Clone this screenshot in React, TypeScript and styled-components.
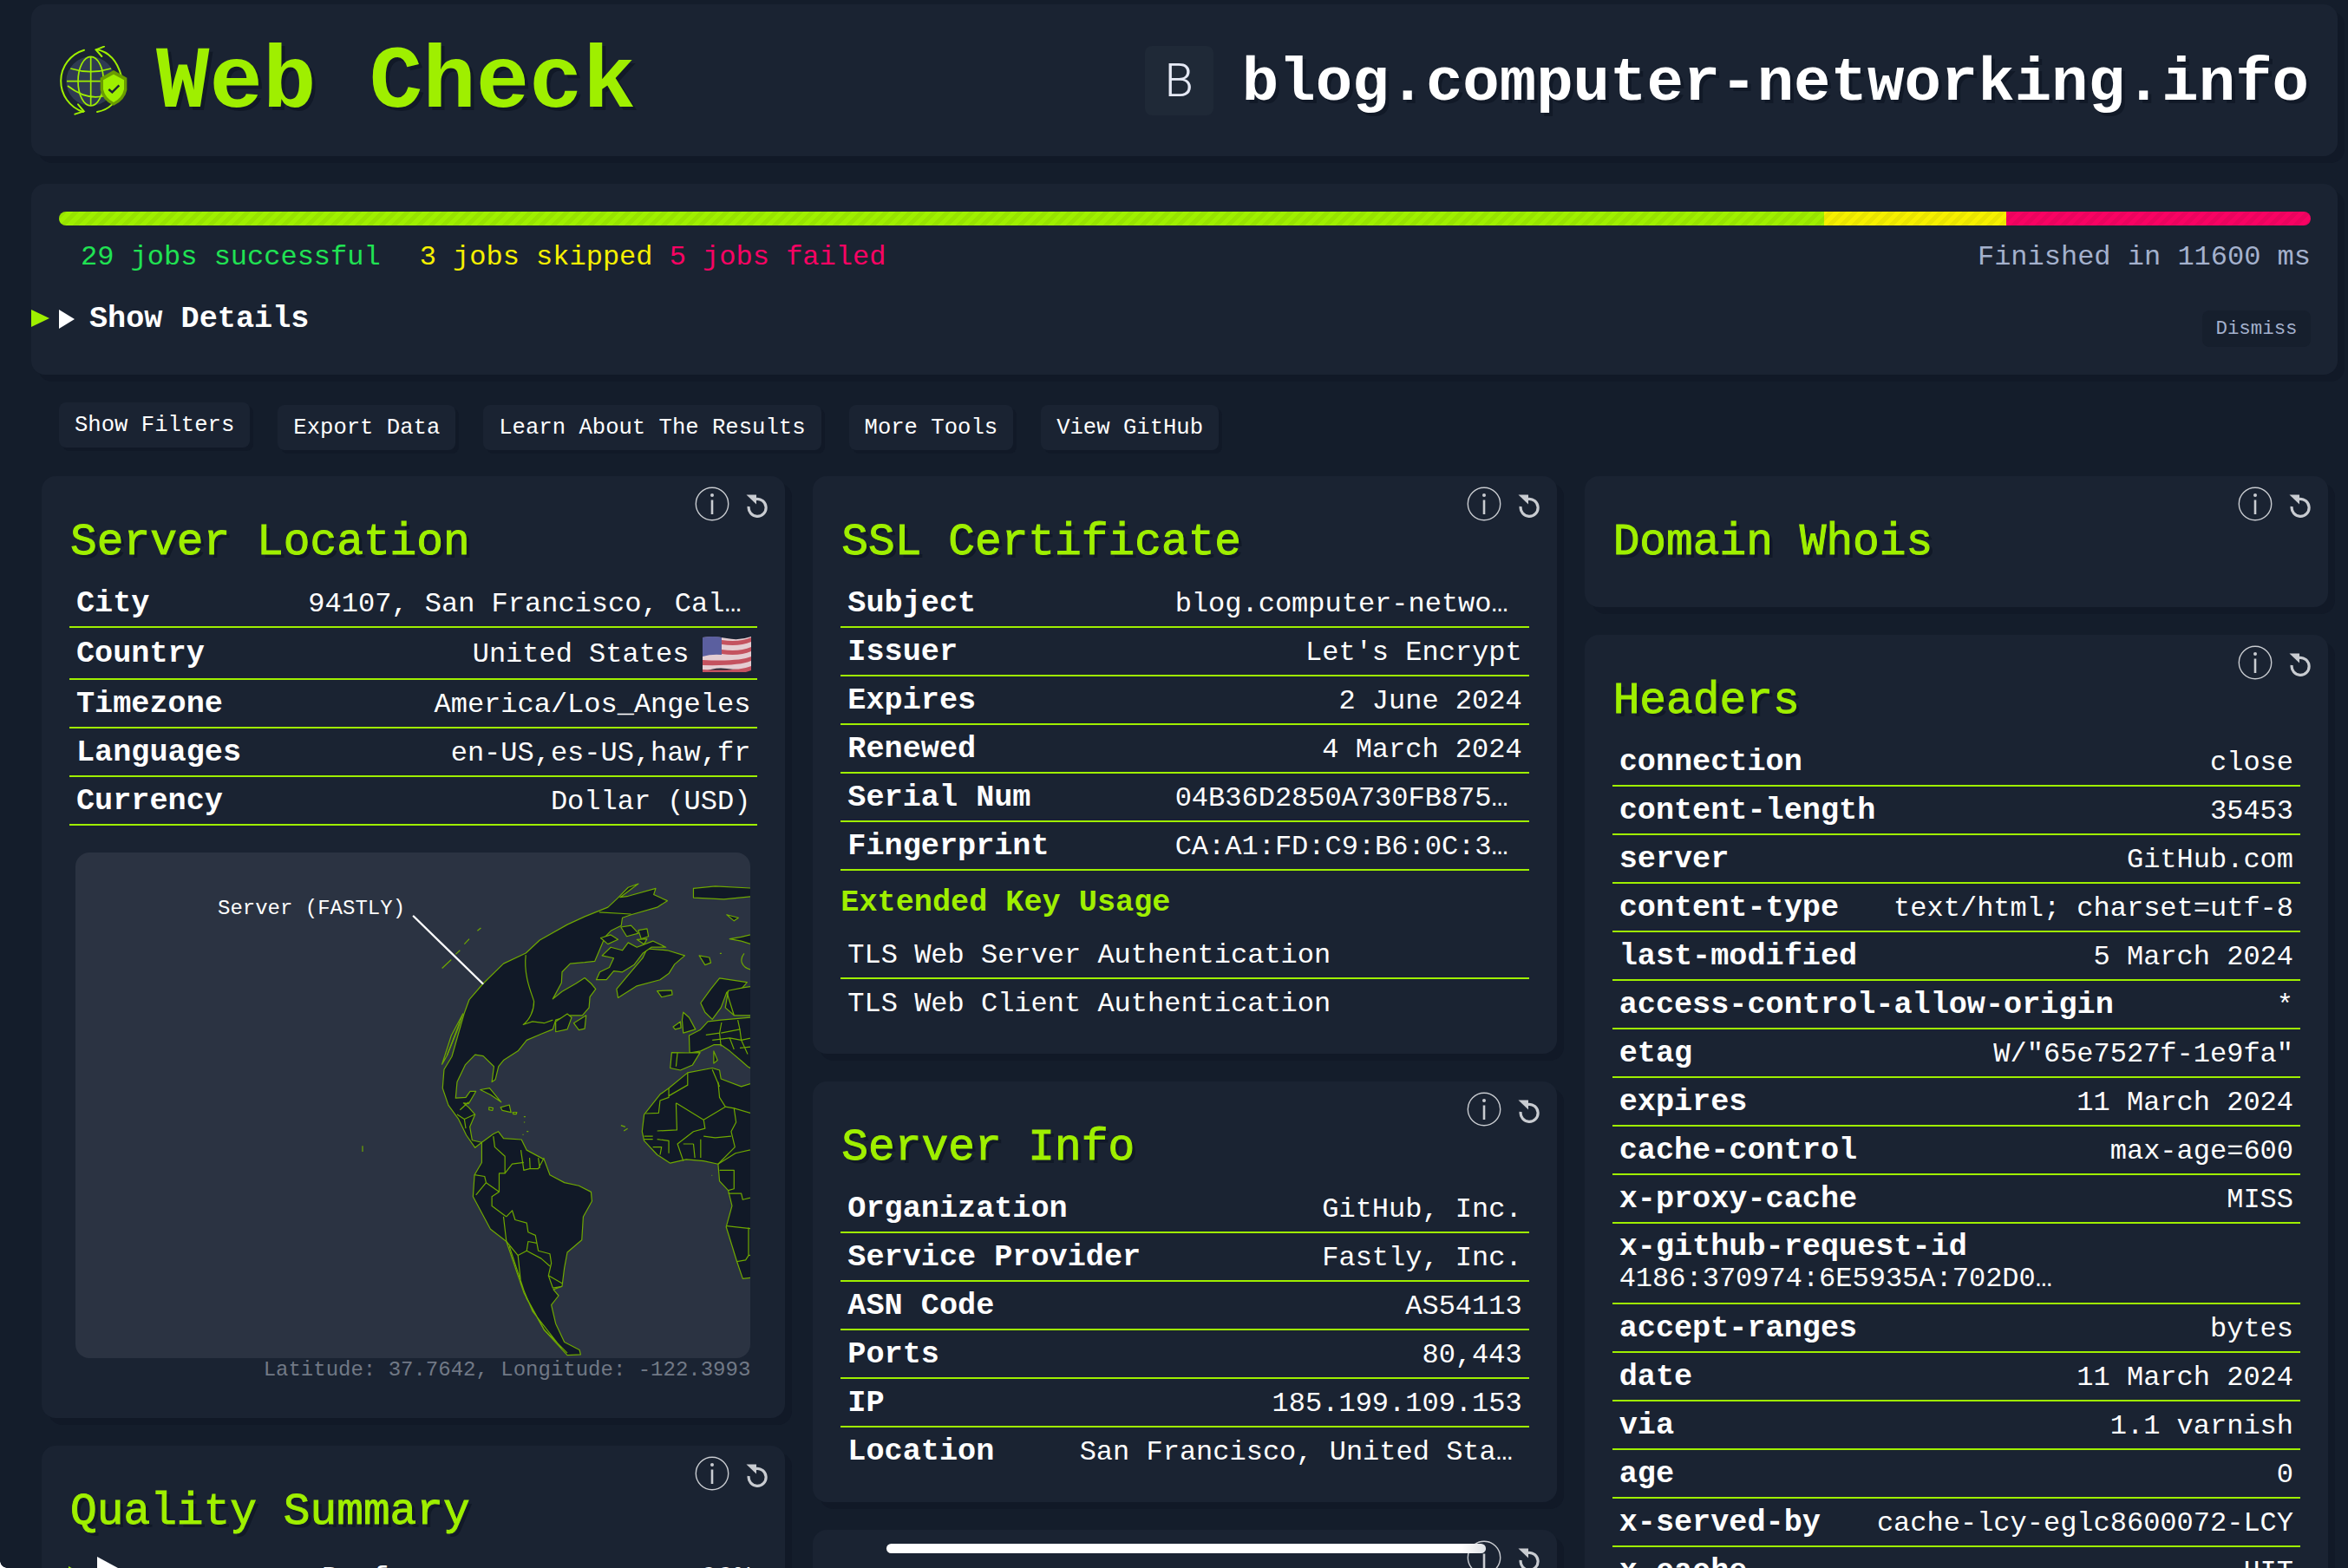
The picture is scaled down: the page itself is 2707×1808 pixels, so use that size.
import React from "react";
import styled, { createGlobalStyle } from "styled-components";

const GREEN = "#9fef00";
const BG = "#141d2b";
const PANEL = "#1a2332";
const SHADOW = "#111927";
const MONO = '"Liberation Mono", "DejaVu Sans Mono", monospace';

const Global = createGlobalStyle`
  html, body { margin: 0; padding: 0; background: ${BG}; height: 100%; overflow: hidden; }
  #root { height: 100%; }
  * { box-sizing: border-box; }
`;

const Page = styled.div`
  position: relative;
  width: 2707px;
  height: 1808px;
  overflow: hidden;
  padding: 5px 12px 0 36px;
  font-family: ${MONO};
  color: #fff;
  background: ${BG};
  &::after {
    content: "";
    position: absolute;
    left: 0;
    bottom: 0;
    width: 8px;
    height: 8px;
    background: radial-gradient(circle at 100% 0, transparent 7.5px, #fff 8px);
  }
`;

const Panel = styled.section`
  background: ${PANEL};
  border-radius: 16px;
  box-shadow: 8px 8px 0 ${SHADOW};
`;

const Header = styled(Panel)`
  height: 175px;
  display: flex;
  align-items: center;
  justify-content: space-between;
  padding: 0 33px 0 31px;
`;

const Brand = styled.div`
  display: flex;
  align-items: center;
  gap: 33px;
`;

const AppName = styled.h1`
  margin: 0;
  padding-top: 7px;
  font-size: 102.4px;
  line-height: 116px;
  font-weight: 700;
  color: ${GREEN};
  text-shadow: 4px 4px 0 ${SHADOW};
`;

const Target = styled.div`
  display: flex;
  align-items: center;
  gap: 33px;
`;

const Favicon = styled.div`
  width: 79px;
  height: 80px;
  border-radius: 8px;
  background: #1f2937;
  display: flex;
  align-items: center;
  justify-content: center;
  font-family: "Roboto", "Liberation Sans", sans-serif;
  font-size: 54px;
  font-weight: 300;
  color: #e5e9f5;
`;

const Domain = styled.h2`
  margin: 0;
  padding-top: 7px;
  font-size: 70.7px;
  line-height: 80px;
  font-weight: 700;
  color: #fff;
  text-shadow: 4px 4px 0 ${SHADOW};
`;

const Status = styled(Panel)`
  position: relative;
  margin-top: 32px;
  padding: 32px 31px 32px 32px;
  height: 220px;
`;

const Progress = styled.div`
  position: relative;
  display: flex;
  height: 16px;
  border-radius: 8px;
  overflow: hidden;
  &::after {
    content: "";
    position: absolute;
    inset: 0;
    background: repeating-linear-gradient(
      -45deg,
      rgba(0, 0, 0, 0.05) 0 5px,
      transparent 5px 10px
    );
  }
`;

const Segment = styled.div<{ $c: string; $w: number }>`
  flex: ${(p) => p.$w} 0 0;
  background: ${(p) => p.$c};
`;

const StatusLine = styled.div`
  display: flex;
  justify-content: space-between;
  margin-top: 19px;
  font-size: 32px;
  line-height: 36px;
  color: #a4b1cd;
`;

const Count = styled.span<{ $c: string; $pad?: boolean }>`
  color: ${(p) => p.$c};
  ${(p) => (p.$pad ? "padding: 0 45px 0 25px;" : "")}
`;

const DetailsRow = styled.div`
  display: flex;
  justify-content: space-between;
  align-items: flex-end;
  height: 85px;
`;

const Details = styled.div`
  display: flex;
  align-items: center;
  gap: 17px;
  margin-bottom: 12px;
  font-size: 35.2px;
  line-height: 40px;
  font-weight: 700;
`;

const Tri = styled.span<{ $w: number; $h: number; $c: string }>`
  display: block;
  width: ${(p) => p.$w}px;
  height: ${(p) => p.$h}px;
  background: ${(p) => p.$c};
  clip-path: polygon(0 0, 100% 50%, 0 100%);
`;

const EdgeMarker = styled(Tri)`
  position: absolute;
  left: 0;
  top: 145px;
`;

const Dismiss = styled.button`
  width: 125px;
  height: 42px;
  border: 0;
  padding: 0;
  border-radius: 8px;
  background: #161f2d;
  font-family: ${MONO};
  font-size: 22.4px;
  color: #a4b1cd;
`;

const Actions = styled.nav`
  display: flex;
  gap: 32px;
  align-items: flex-start;
  margin: 32px 0 0 32px;
  height: 55px;
`;

const ActionButton = styled.button<{ $up?: boolean }>`
  height: 52px;
  padding: 0 18px;
  margin-top: ${(p) => (p.$up ? 0 : 3)}px;
  border: 0;
  border-radius: 8px;
  background: ${PANEL};
  box-shadow: 4px 4px 0 ${SHADOW};
  font-family: ${MONO};
  font-size: 25.6px;
  color: #fff;
`;

const Grid = styled.main`
  display: grid;
  grid-template-columns: repeat(3, 1fr);
  gap: 32px;
  align-items: start;
  margin: 30px 11px 0 12px;
`;

const Column = styled.div`
  display: flex;
  flex-direction: column;
  gap: 32px;
`;

const Card = styled(Panel)`
  position: relative;
  padding: 47px 32px 32px;
`;

const CardIcons = styled.div`
  position: absolute;
  top: 12px;
  right: 19px;
  display: flex;
  align-items: flex-start;
  gap: 19px;
  color: #c9ccd1;
`;

const Title = styled.h3`
  margin: 0 0 14px 1px;
  font-size: 51.2px;
  line-height: 58px;
  font-weight: 400;
  -webkit-text-stroke: 1px ${GREEN};
  color: ${GREEN};
  text-shadow: 4px 4px 0 ${SHADOW};
`;

const RowBox = styled.div<{ $last?: boolean; $tall?: boolean }>`
  display: flex;
  justify-content: space-between;
  align-items: center;
  height: ${(p) => (p.$tall ? 60 : p.$last ? 54 : 56)}px;
  padding: 2px 8px 0;
  font-size: 32px;
  ${(p) => (p.$last ? "" : `border-bottom: 2px solid ${GREEN};`)}
`;

const Key = styled.span`
  font-size: 35.2px;
  font-weight: 700;
  white-space: nowrap;
`;

const Val = styled.span<{ $max?: number }>`
  white-space: nowrap;
  overflow: hidden;
  text-overflow: ellipsis;
  ${(p) => (p.$max ? `max-width: ${p.$max}px;` : "")}
`;

const StackRow = styled.div`
  height: 93px;
  padding: 9px 8px 0;
  font-size: 32px;
  line-height: 36px;
  border-bottom: 2px solid ${GREEN};
`;

const StackVal = styled.div`
  width: 510px;
  white-space: nowrap;
  overflow: hidden;
  text-overflow: ellipsis;
`;

const ValueFlag = styled.span`
  display: flex;
  align-items: center;
  gap: 16px;
  margin-right: -1px;
`;

const SubHeading = styled.h4`
  margin: 17px 0 12px;
  font-size: 35.2px;
  line-height: 40px;
  font-weight: 700;
  color: ${GREEN};
`;

const MapBox = styled.div`
  position: relative;
  margin: 31px 8px 0 7px;
  height: 583px;
  border-radius: 16px;
  overflow: hidden;
  background: #2b3342;
`;

const MapSvg = styled.svg`
  display: block;
  width: 100%;
  height: 100%;
`;

const MapLabel = styled.span`
  position: absolute;
  left: 164px;
  top: 51px;
  font-size: 24px;
  line-height: 28px;
  color: #fff;
`;

const Caption = styled.p`
  margin: 0 8px 9px 0;
  text-align: right;
  font-size: 24px;
  line-height: 28px;
  color: #717986;
`;

const ScoreRow = styled.div`
  position: relative;
  height: 56px;
  padding-top: 10px;
  display: flex;
  align-items: center;
  justify-content: center;
  font-size: 32px;
`;

const ScoreName = styled.span``;

const ScoreValue = styled.span`
  position: absolute;
  right: 8px;
`;

const ScoreMarkerA = styled(Tri)`
  position: absolute;
  left: -1px;
  top: 20px;
`;

const ScoreMarkerB = styled(Tri)`
  position: absolute;
  left: 32px;
  top: 9px;
`;

const LoaderBar = styled.div`
  position: absolute;
  left: 85px;
  top: 16px;
  width: 691px;
  height: 11px;
  border-radius: 6px;
  background: linear-gradient(90deg, #fff 96%, #dfe2e6);
`;

const EmptyCard = styled(Card)`
  height: 300px;
`;

const InfoIcon = () => (
  <svg width="40" height="40" viewBox="0 0 40 40" fill="none" stroke="currentColor">
    <circle cx="20" cy="20" r="18.7" strokeWidth="1.4" />
    <circle cx="20" cy="10" r="2" fill="currentColor" stroke="none" />
    <path d="M20 15.5V32" strokeWidth="2.6" />
  </svg>
);

const ReloadIcon = () => (
  <svg width="26" height="28" viewBox="0 0 26 28" fill="none" stroke="currentColor" style={{ marginTop: 8 }}>
    <path d="M11.5 6.5A10 10 0 1 1 3.2 15" strokeWidth="3.2" />
    <path d="M0.5 1.5h11.5v11z" fill="currentColor" stroke="none" />
  </svg>
);

const Icons = () => (
  <CardIcons>
    <InfoIcon />
    <ReloadIcon />
  </CardIcons>
);

const Logo = () => (
  <svg width="80" height="80" viewBox="85 100 240 240" fill="none" stroke={GREEN}>
    <circle cx="198" cy="222" r="85" fill="#2f3b52" stroke="none" />
    <g strokeWidth="5">
      <ellipse cx="198" cy="222" rx="44" ry="85" />
      <path d="M198 137V306M115 222H280M128 178Q198 200 268 178M118 238Q198 300 270 262" />
    </g>
    <g strokeWidth="6" strokeLinecap="round">
      <path d="M175 114A112 112 0 0 0 172 328" />
      <path d="M143 336L174 326L154 302" />
      <path d="M218 112Q282 124 304 205" />
      <path d="M244 102L216 113L236 136" />
      <path d="M220 328Q252 322 272 302" />
    </g>
    <path d="M277 184L323 210V252Q316 288 277 306Q238 288 231 252V210Z" fill="#6a9c00" stroke="none" />
    <path d="M277 198L313 218V250Q306 280 277 295Q248 280 241 250V218Z" fill={GREEN} stroke="none" />
    <path d="M260 250L272 260L296 236" stroke="#1a2332" strokeWidth="7" />
  </svg>
);

const Flag = () => (
  <svg width="56" height="41" viewBox="0 0 56 41">
    <path d="M0 1Q14 -1 28 2T56 0V37Q42 39 28 37T0 41Z" fill="#e5cdd2" />
    {[3, 14, 25, 36].map((y) => (
      <path
        key={y}
        d={`M${y < 25 ? 22 : 0} ${y + (y < 25 ? 1 : 2)}Q42 ${y + 4} 56 ${y - 2}V${y + 3}Q42 ${y + 9} ${y < 25 ? 22 : 0} ${y + (y < 25 ? 6 : 8)}Z`}
        fill="#c4525f"
      />
    ))}
    <path d="M0 1Q12 -1 22 1V21Q10 20 0 23Z" fill="#5b5f9f" />
  </svg>
);

const LAND = [
  // North and Central America
  "M350 322L420 258L497 224L545 182L640 132L700 106L780 76L812 48L850 12L885 0L822 44L850 40L945 15L938 35L985 55L950 76L860 100L830 110L826 135L790 152L770 172L752 212L735 250L700 254L650 258L622 285L620 320L590 372L622 348L670 322L700 304L722 322L738 340L718 365L715 400L692 425L650 425L600 440L590 470L550 485L500 505L470 540L420 570L403 590L392 632L380 640L387 590L350 556L322 552L288 585L260 640L255 692L290 690L305 670L325 670L300 710L282 708L300 722L322 745L304 785L312 828L345 835L322 852L292 812L265 760L230 715L210 660L215 600L242 558L284 420L302 374Z",
  // South America
  "M345 835L385 808L402 800L420 822L482 826L500 860L560 890L580 940L630 965L680 975L722 995L725 1025L695 1075L690 1150L640 1190L630 1240L622 1300L592 1310L610 1330L585 1360L600 1420L630 1480L682 1505L686 1520L640 1522L560 1440L490 1320L430 1155L375 1115L315 1010L320 940L345 900Z",
  // Africa
  "M905 745L960 680L990 660L1055 610L1140 595L1165 602L1170 630L1240 655L1290 640L1290 1270L1245 1275L1225 1220L1188 1108L1208 1040L1195 990L1165 960L1160 905L1110 895L1050 890L995 902L950 875L905 830L898 800Z",
  // Greenland, Iceland, British Isles
  "M815 368L810 340L850 295L900 240L915 210L985 215L1045 232L1010 260L990 290L960 310L880 330Z",
  "M950 346L1000 344L1002 358L965 366Z",
  "M1040 415L1060 432L1082 470L1040 482L1036 440Z",
  "M1005 462L1030 445L1032 465L1012 470Z",
  // Scandinavia and Finland
  "M1100 385L1135 340L1165 305L1200 310L1260 318L1240 340L1190 350L1170 400L1140 438L1115 415Z",
  "M1195 345L1250 335L1290 330L1290 425L1215 425L1185 400Z",
  // Mainland Europe
  "M1098 472L1125 445L1170 440L1290 430L1290 605L1262 590L1240 572L1200 540L1170 520L1145 520L1100 540L1062 546L1060 490Z",
  "M1000 545L1060 546L1098 545L1072 585L1030 602L995 595Z",
  "M1145 540L1158 570L1145 580Z",
  // Arctic Russia and Svalbard
  "M1075 15L1150 8L1290 15L1290 40L1180 50L1075 45Z",
  "M1200 178L1240 172L1290 160L1290 200L1240 185Z",
  "M1190 100L1230 110L1215 120Z",
  // Caribbean
  "M340 665L372 660L412 705L376 682Z",
  "M410 722L440 714L446 738L416 732Z",
  "M370 722L384 724L382 732L370 730Z",
  "M452 738L466 738L464 744L454 744Z",
  // Canadian Arctic
  "M740 310L752 285L785 270L800 240L760 232L790 205L830 215L850 190L880 205L935 185L980 205L930 205L900 225L870 262L830 285L800 282L775 310Z",
  "M755 175L790 165L815 180L780 195Z",
  "M825 140L860 135L885 160L845 170Z",
  "M885 150L915 145L920 170L895 178Z",
  "M880 180L915 178L905 195Z",
  // Gulf of St Lawrence, Newfoundland
  "M600 445L640 420L655 432L640 470L600 478Z",
  "M662 450L705 425L700 468L680 472Z",
  // Svalbard-side islets
  "M1095 232L1130 238L1135 255L1115 262Z",
];

const LINES = [
  "M497 230C488 300 520 360 525 380C525 410 510 440 488 455L520 445L560 450L590 440",
  "M750 92L860 98",
  "M208 583L240 490L280 420L262 470L225 555Z",
  "M225 555L270 445",
  "M208 273L240 245M255 228L270 215M285 195L302 178M330 152L342 143",
  "M260 745L285 760L320 745M285 760L290 790M270 730L300 705",
  "M385 815L390 850L425 880L425 935L405 935L405 995L380 1010L380 1040L430 1075",
  "M480 860L490 925L510 920L540 920L560 885M510 885L512 920M540 885L545 918",
  "M425 935L450 905L490 900",
  "M320 940L355 945L360 965L325 1005M360 965L405 995",
  "M430 1075L450 1055L460 1085L500 1095L505 1125L530 1135L540 1185L580 1195L585 1225L575 1265L622 1290",
  "M430 1155L420 1075M430 1155L470 1200L500 1185L505 1155L535 1160M500 1185L550 1210L580 1235",
  "M470 1200L480 1290L520 1380L620 1500M440 1170L500 1340L560 1440L640 1515M575 1265L590 1305L622 1300",
  "M990 685L1055 650L1055 610M990 660L990 690L960 700L955 740L910 742",
  "M1015 708L1110 762L1185 720L1165 690L1160 640M1015 708L1018 795L950 798M1110 762L1115 790L1075 800L1020 840L1040 895",
  "M1185 720L1215 725L1222 770L1205 800L1218 850L1160 905M1215 725L1290 745",
  "M1075 840L1080 885M1100 825L1100 885M1110 815L1150 820L1205 815M1040 840L1075 840",
  "M905 815L935 815M905 825L935 825M935 850L965 850L960 875M950 825L990 830L990 870",
  "M1190 1105L1290 1115M1165 925L1215 925L1215 985L1195 990M1195 1000L1240 1000L1245 1020L1290 1010",
  "M1290 855L1220 870L1160 905M1140 600L1165 655M1225 1220L1255 1215L1265 1200L1290 1198M1265 1110L1265 1200",
  "M1118 488L1165 482L1172 448M1165 482L1170 525M1170 482L1235 470L1228 440M1235 470L1240 505L1290 495",
  "M1140 505L1200 498L1240 505M1200 498L1215 535M1240 505L1262 550M1235 530L1290 525",
  "M1190 350L1215 425M1020 545L1015 590",
  "M1250 225C1232 245 1240 270 1275 278",
  "M1166 225h6M490 752h6M490 770h4M500 800h6M486 810h3",
  "M825 780L840 785M835 798L848 790",
  "M-66 846V865",
  "M1138 942h2",
];

const WorldMap = () => (
  <MapSvg viewBox="-1056 -100.8 2328 1632.4" preserveAspectRatio="none">
    <g fill="#111927" stroke="#6fa800" strokeWidth="1.2" strokeLinejoin="round">
      {LAND.map((d) => (
        <path key={d} d={d} vectorEffect="non-scaling-stroke" />
      ))}
      {LINES.map((d) => (
        <path key={d} d={d} fill="none" vectorEffect="non-scaling-stroke" />
      ))}
    </g>
    <path d="M110 105L348 322" stroke="#fff" strokeWidth="2.4" strokeLinecap="round" vectorEffect="non-scaling-stroke" />
  </MapSvg>
);

type RowData = [string, string, number?];

const Row = ({ k, v, max, last }: { k: string; v: string; max?: number; last?: boolean }) => (
  <RowBox $last={last}>
    <Key>{k}</Key>
    <Val $max={max}>{v}</Val>
  </RowBox>
);

const Rows = ({ rows, lastBare }: { rows: RowData[]; lastBare?: boolean }) => (
  <>
    {rows.map(([k, v, max], i) => (
      <Row key={k} k={k} v={v} max={max} last={lastBare && i === rows.length - 1} />
    ))}
  </>
);

const ssl: RowData[] = [
  ["Subject", "blog.computer-networking.info", 400],
  ["Issuer", "Let's Encrypt"],
  ["Expires", "2 June 2024"],
  ["Renewed", "4 March 2024"],
  ["Serial Num", "04B36D2850A730FB875A1E0C6D2F", 400],
  ["Fingerprint", "CA:A1:FD:C9:B6:0C:3E:52:7B:90", 400],
];

const serverInfo: RowData[] = [
  ["Organization", "GitHub, Inc."],
  ["Service Provider", "Fastly, Inc."],
  ["ASN Code", "AS54113"],
  ["Ports", "80,443"],
  ["IP", "185.199.109.153"],
  ["Location", "San Francisco, United States", 510],
];

const headersA: RowData[] = [
  ["connection", "close"],
  ["content-length", "35453"],
  ["server", "GitHub.com"],
  ["content-type", "text/html; charset=utf-8"],
  ["last-modified", "5 March 2024"],
  ["access-control-allow-origin", "*"],
  ["etag", 'W/"65e7527f-1e9fa"'],
  ["expires", "11 March 2024"],
  ["cache-control", "max-age=600"],
  ["x-proxy-cache", "MISS"],
];

const headersB: RowData[] = [
  ["accept-ranges", "bytes"],
  ["date", "11 March 2024"],
  ["via", "1.1 varnish"],
  ["age", "0"],
  ["x-served-by", "cache-lcy-eglc8600072-LCY"],
  ["x-cache", "HIT"],
];

export default function App() {
  return (
    <Page>
      <Global />
      <Header>
        <Brand>
          <Logo />
          <AppName>Web Check</AppName>
        </Brand>
        <Target>
          <Favicon>B</Favicon>
          <Domain>blog.computer-networking.info</Domain>
        </Target>
      </Header>

      <Status>
        <Progress>
          <Segment $c={GREEN} $w={29} />
          <Segment $c="#f6f000" $w={3} />
          <Segment $c="#f80363" $w={5} />
        </Progress>
        <StatusLine>
          <span>
            <Count $c="#20e253" $pad>29 jobs successful</Count>
            <Count $c="#f6f000">3 jobs skipped</Count>{" "}
            <Count $c="#f80363">5 jobs failed</Count>
          </span>
          <span>Finished in 11600 ms</span>
        </StatusLine>
        <EdgeMarker $w={21} $h={20} $c={GREEN} />
        <DetailsRow>
          <Details>
            <Tri $w={18} $h={22} $c="#fff" />
            Show Details
          </Details>
          <Dismiss>Dismiss</Dismiss>
        </DetailsRow>
      </Status>

      <Actions>
        <ActionButton $up>Show Filters</ActionButton>
        <ActionButton>Export Data</ActionButton>
        <ActionButton>Learn About The Results</ActionButton>
        <ActionButton>More Tools</ActionButton>
        <ActionButton>View GitHub</ActionButton>
      </Actions>

      <Grid>
        <Column>
          <Card>
            <Icons />
            <Title>Server Location</Title>
            <Row k="City" v="94107, San Francisco, California" max={510} />
            <RowBox $tall>
              <Key>Country</Key>
              <ValueFlag>
                United States <Flag />
              </ValueFlag>
            </RowBox>
            <Row k="Timezone" v="America/Los_Angeles" />
            <Row k="Languages" v="en-US,es-US,haw,fr" />
            <Row k="Currency" v="Dollar (USD)" />
            <MapBox>
              <WorldMap />
              <MapLabel>Server (FASTLY)</MapLabel>
            </MapBox>
            <Caption>Latitude: 37.7642, Longitude: -122.3993</Caption>
          </Card>
          <Card>
            <Icons />
            <Title>Quality Summary</Title>
            <ScoreRow>
              <ScoreMarkerA $w={20} $h={22} $c={GREEN} />
              <ScoreMarkerB $w={24} $h={26} $c="#fff" />
              <ScoreName>Performance</ScoreName>
              <ScoreValue>99%</ScoreValue>
            </ScoreRow>
          </Card>
        </Column>

        <Column>
          <Card>
            <Icons />
            <Title>SSL Certificate</Title>
            <Rows rows={ssl} />
            <SubHeading>Extended Key Usage</SubHeading>
            <RowBox>
              <Val>TLS Web Server Authentication</Val>
            </RowBox>
            <RowBox $last>
              <Val>TLS Web Client Authentication</Val>
            </RowBox>
          </Card>
          <Card>
            <Icons />
            <Title>Server Info</Title>
            <Rows rows={serverInfo} lastBare />
          </Card>
          <EmptyCard>
            <Icons />
            <LoaderBar />
          </EmptyCard>
        </Column>

        <Column>
          <Card>
            <Icons />
            <Title>Domain Whois</Title>
          </Card>
          <Card>
            <Icons />
            <Title>Headers</Title>
            <Rows rows={headersA} />
            <StackRow>
              <Key>x-github-request-id</Key>
              <StackVal>4186:370974:6E5935A:702D0C4:65EF2B17</StackVal>
            </StackRow>
            <Rows rows={headersB} />
          </Card>
        </Column>
      </Grid>
    </Page>
  );
}
